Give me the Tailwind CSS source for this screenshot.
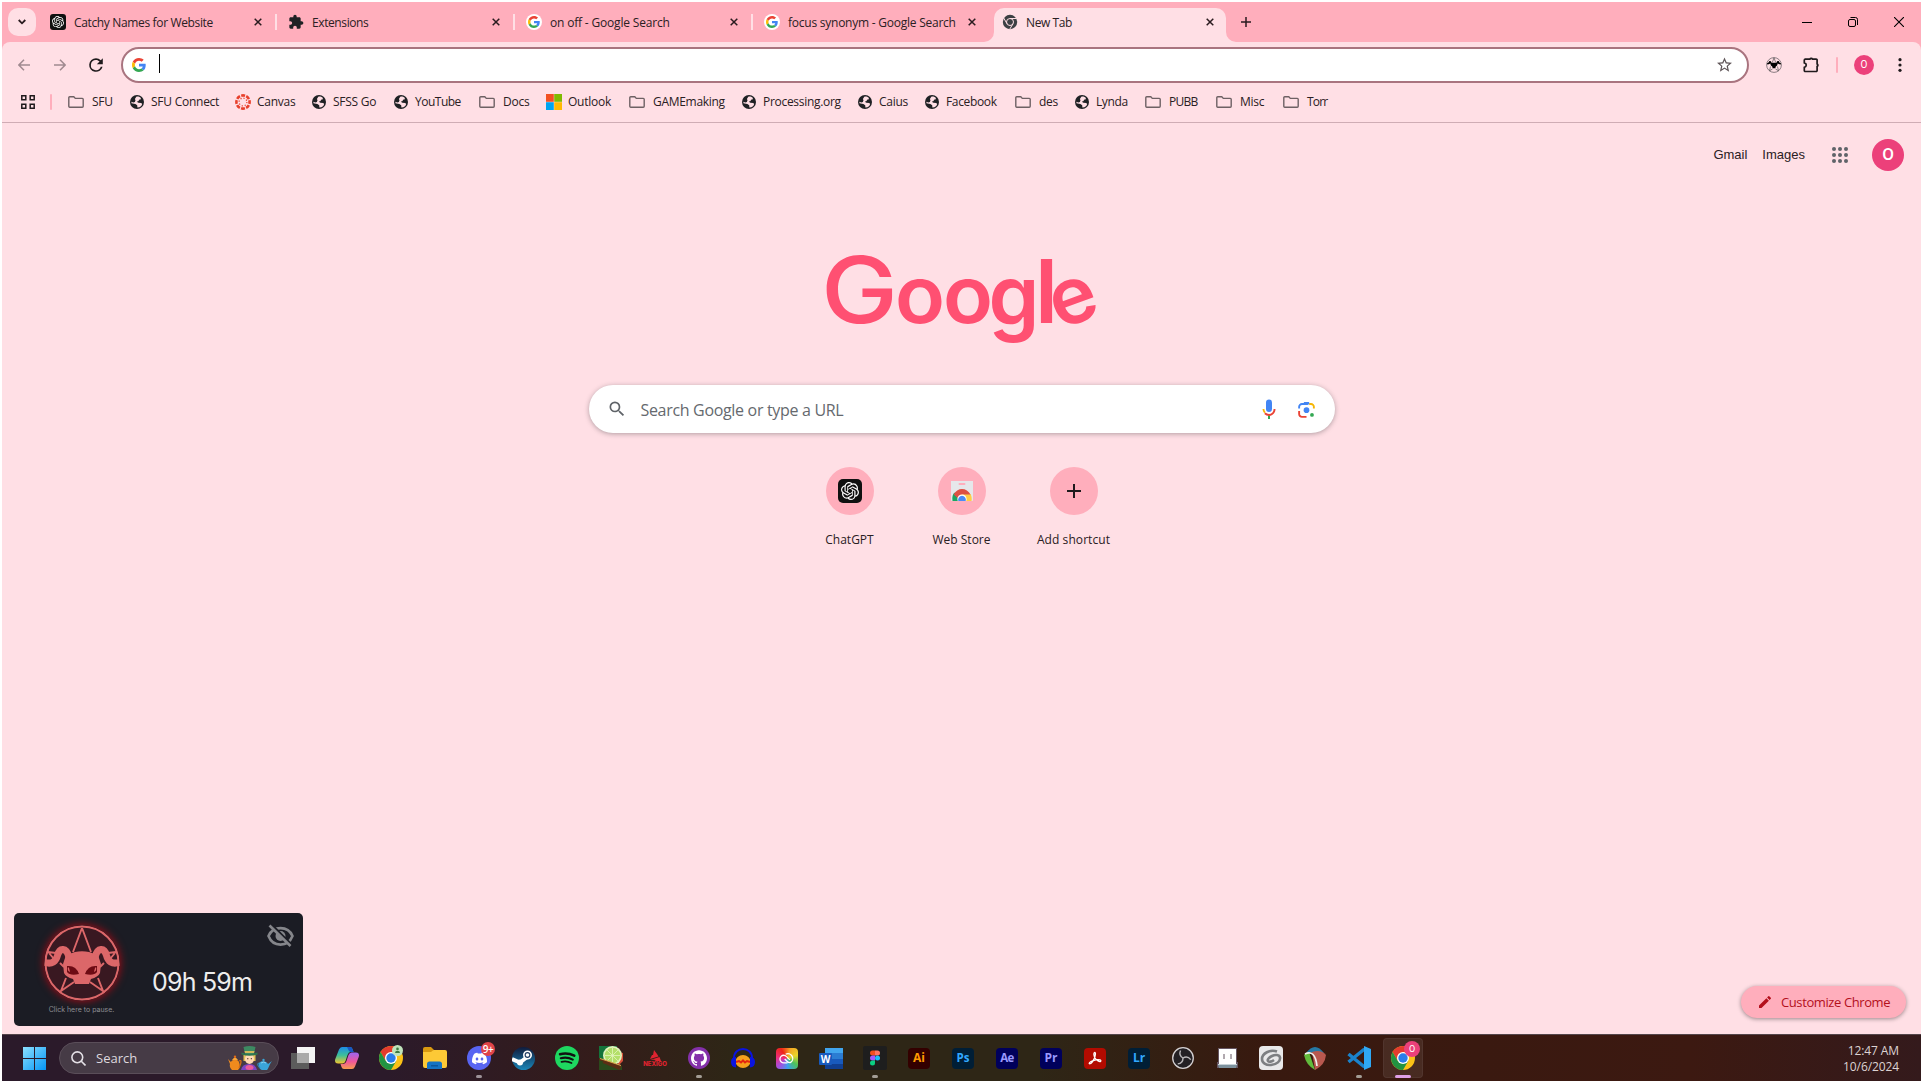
<!DOCTYPE html>
<html lang="en">
<head>
  <meta charset="UTF-8" />
  <meta name="viewport" content="width=device-width, initial-scale=1.0">
  <title>New Tab</title>
  <script src="https://cdn.jsdelivr.net/npm/@tailwindcss/browser@4"></script>
</head>
<body class="bg-white overflow-hidden font-['Open_Sans','Noto_Sans',sans-serif] text-[#2a2023]">

  <!-- Shared icons -->
  <svg class="hidden">
    <symbol id="google" viewBox="0 0 48 48">
      <path fill="#EA4335" d="M24 9.5c3.54 0 6.71 1.22 9.21 3.6l6.85-6.85C35.9 2.38 30.47 0 24 0 14.62 0 6.51 5.38 2.56 13.22l7.98 6.19C12.43 13.72 17.74 9.5 24 9.5z"/>
      <path fill="#4285F4" d="M46.98 24.55c0-1.57-.15-3.09-.38-4.55H24v9.02h12.94c-.58 2.96-2.26 5.48-4.78 7.18l7.73 6c4.51-4.18 7.09-10.36 7.09-17.65z"/>
      <path fill="#FBBC05" d="M10.53 28.59A14.5 14.5 0 0 1 9.77 24c0-1.6.27-3.14.76-4.59l-7.98-6.19A23.9 23.9 0 0 0 0 24c0 3.88.92 7.54 2.56 10.78l7.97-6.19z"/>
      <path fill="#34A853" d="M24 48c6.48 0 11.93-2.13 15.89-5.81l-7.73-6c-2.15 1.45-4.92 2.3-8.16 2.3-6.26 0-11.57-4.22-13.47-9.91l-7.98 6.19C6.51 42.62 14.62 48 24 48z"/>
    </symbol>
    <symbol id="openai" viewBox="0 0 24 24">
      <path d="M22.2819 9.8211a5.9847 5.9847 0 0 0-.5157-4.9108 6.0462 6.0462 0 0 0-6.5098-2.9A6.0651 6.0651 0 0 0 4.9807 4.1818a5.9847 5.9847 0 0 0-3.9977 2.9 6.0462 6.0462 0 0 0 .7427 7.0966 5.98 5.98 0 0 0 .511 4.9107 6.051 6.051 0 0 0 6.5146 2.9001A5.9847 5.9847 0 0 0 13.2599 24a6.0557 6.0557 0 0 0 5.7718-4.2058 5.9894 5.9894 0 0 0 3.9977-2.9001 6.0557 6.0557 0 0 0-.7475-7.0729zm-9.022 12.6081a4.4755 4.4755 0 0 1-2.8764-1.0408l.1419-.0804 4.7783-2.7582a.7948.7948 0 0 0 .3927-.6813v-6.7369l2.02 1.1686a.071.071 0 0 1 .038.052v5.5826a4.504 4.504 0 0 1-4.4945 4.4944zm-9.6607-4.1254a4.4708 4.4708 0 0 1-.5346-3.0137l.142.0852 4.783 2.7582a.7712.7712 0 0 0 .7806 0l5.8428-3.3685v2.3324a.0804.0804 0 0 1-.0332.0615L9.74 19.9502a4.4992 4.4992 0 0 1-6.1408-1.6464zM2.3408 7.8956a4.485 4.485 0 0 1 2.3655-1.9728V11.6a.7664.7664 0 0 0 .3879.6765l5.8144 3.3543-2.0201 1.1685a.0757.0757 0 0 1-.071 0l-4.8303-2.7865A4.504 4.504 0 0 1 2.3408 7.872zm16.5963 3.8558L13.1038 8.364 15.1192 7.2a.0757.0757 0 0 1 .071 0l4.8303 2.7913a4.4944 4.4944 0 0 1-.6765 8.1042v-5.6772a.79.79 0 0 0-.407-.667zm2.0107-3.0231l-.142-.0852-4.7735-2.7818a.7759.7759 0 0 0-.7854 0L9.409 9.2297V6.8974a.0662.0662 0 0 1 .0284-.0615l4.8303-2.7866a4.4992 4.4992 0 0 1 6.6802 4.66zM8.3065 12.863l-2.02-1.1638a.0804.0804 0 0 1-.038-.0567V6.0742a4.4992 4.4992 0 0 1 7.3757-3.4537l-.142.0805L8.704 5.459a.7948.7948 0 0 0-.3927.6813zm1.0976-2.3654l2.602-1.4998 2.6069 1.4998v2.9994l-2.5974 1.4997-2.6067-1.4997Z"/>
    </symbol>
    <symbol id="folder" viewBox="0 0 16 12">
      <path d="M1.7.8h4.1l1.5 1.6h7a.9.9 0 0 1 .9.9v7a.9.9 0 0 1-.9.9H1.7a.9.9 0 0 1-.9-.9V1.700a.9.9 0 0 1 .9-.9z" fill="none" stroke="#6e6164" stroke-width="1.4"/>
    </symbol>
    <symbol id="globe" viewBox="0 0 14 14">
      <circle cx="7" cy="7" r="7" fill="#1f2124"/>
      <path d="M6.300 1.700c1.500-.3 3.200 0 4.400 1.100l.2 1.500-1.900.5-.4 1.300-1.800.7 1.600.9 2.800.4 1 .9-.9 2-1.900 1.300-2 .2-.2-2.200-1.800-1.300L1.500 8.200l-.1-1.400 1.900.6 1.600-.5.6-1.600-.6-1.300z" fill="#ffdfe5"/>
    </symbol>
    <symbol id="close" viewBox="0 0 8 8">
      <path d="M.7.7l6.600 6.600M7.300.7L.7 7.300" stroke="#2a1b1f" stroke-width="1.5" fill="none"/>
    </symbol>
    <symbol id="search" viewBox="0 0 24 24">
      <path d="M15.500 14h-.79l-.28-.27A6.471 6.471 0 0 0 16 9.500 6.500 6.500 0 1 0 9.500 16c1.610 0 3.090-.59 4.230-1.570l.27.28v.79l5 4.990L20.490 19l-4.990-5zm-6 0C7.010 14 5 11.990 5 9.500S7.010 5 9.500 5 14 7.010 14 9.500 11.990 14 9.500 14z"/>
    </symbol>
    <symbol id="chrome" viewBox="0 0 24 24">
      <circle cx="12" cy="12" r="12" fill="#fbc116"/>
      <path d="M12 6h10.390A12 12 0 0 0 1.610 6L6.800 15z" fill="#e33b2e"/>
      <path d="M1.610 6A12 12 0 0 0 12 24l5.200-9H6.800z" fill="#229342"/>
      <circle cx="12" cy="12" r="6" fill="#fff"/>
      <circle cx="12" cy="12" r="4.700" fill="#2a7de9"/>
    </symbol>
    <!-- goat skull inside a pentagram -->
    <symbol id="goat" viewBox="0 0 76 76">
      <circle cx="38" cy="38" r="36.500" fill="none" stroke="currentColor" stroke-width="2"/>
      <path d="M38 3L29 27M38 3l9 24M4 27l8 1M72 27l-8 1M5 28l5 6M71 28l-5 6M16 38l4 4M60 38l-4 4M22 53l-5 13 13-9M54 53l5 13-13-9" fill="none" stroke="currentColor" stroke-width="1.900"/>
      <path d="M1 37.500c7 2 11-1 12.500-7 2-8 9-8.500 11.500 2M75 37.500c-7 2-11-1-12.500-7-2-8-9-8.500-11.500 2" fill="none" stroke="currentColor" stroke-width="7"/>
      <path d="M22 30q6-2 9-3 7-1.500 14 0 3 1 9 3l3 9-1 9q-2 4-9 6l-2 5H31l-2-5q-7-2-9-6l-1-9z" fill="currentColor"/>
      <path d="M23 41q9-1 12 8-9 2-12-2zM53 41q-9-1-12 8 9 2 12-2z" fill="#6d0b14"/>
      <path d="M24 42q-1 4 2 5l-1-4zM52 42q1 4-2 5l1-4z" fill="currentColor"/>
    </symbol>
  </svg>

  <div class="w-[1923px] h-[1083px] p-[2px] flex flex-col">

    <!-- Tab strip -->
    <div class="h-10 shrink-0 bg-[#ffaebc] flex items-center text-xs tracking-[-0.35px]">
      <div class="w-[37px] pl-[6px] shrink-0">
        <div class="w-7 h-7 rounded-[10px] bg-[#ffdfe5] flex items-center justify-center">
          <svg class="w-2 h-[6px]" viewBox="0 0 8 6"><path d="M.7 1L4 4.300 7.300 1" fill="none" stroke="#2a1b1f" stroke-width="1.800"/></svg>
        </div>
      </div>
      <div class="w-[238px] shrink-0 flex items-center pl-[11px]">
        <div class="w-4 h-4 rounded-[3px] bg-[#101010] flex items-center justify-center"><svg class="w-3 h-3 fill-white"><use href="#openai"/></svg></div>
        <span class="ml-2 pt-[2px] flex-1 whitespace-nowrap">Catchy Names for Website</span>
        <svg class="w-2 h-2 mr-[13px]"><use href="#close"/></svg>
        <div class="w-[2px] h-4 bg-[#ffdfe5]"></div>
      </div>
      <div class="w-[238px] shrink-0 flex items-center pl-[11px]">
        <svg class="w-4 h-4 fill-[#1f2124]" viewBox="0 0 24 24"><path d="M20.500 11H19V7c0-1.100-.9-2-2-2h-4V3.500C13 2.120 11.880 1 10.500 1S8 2.120 8 3.500V5H4c-1.100 0-1.990.9-1.990 2v3.800H3.500c1.490 0 2.700 1.210 2.700 2.700s-1.210 2.700-2.700 2.700H2V20c0 1.100.9 2 2 2h3.800v-1.500c0-1.490 1.210-2.700 2.700-2.700s2.700 1.210 2.700 2.700V22H17c1.100 0 2-.9 2-2v-4h1.500c1.380 0 2.500-1.120 2.500-2.500S21.880 11 20.500 11z"/></svg>
        <span class="ml-2 pt-[2px] flex-1 whitespace-nowrap tracking-[-0.4px]">Extensions</span>
        <svg class="w-2 h-2 mr-[13px]"><use href="#close"/></svg>
        <div class="w-[2px] h-4 bg-[#ffdfe5]"></div>
      </div>
      <div class="w-[238px] shrink-0 flex items-center pl-[11px]">
        <div class="w-4 h-4 rounded-full bg-white flex items-center justify-center"><svg class="w-3 h-3"><use href="#google"/></svg></div>
        <span class="ml-2 pt-[2px] flex-1 whitespace-nowrap tracking-[-0.18px]">on off - Google Search</span>
        <svg class="w-2 h-2 mr-[13px]"><use href="#close"/></svg>
        <div class="w-[2px] h-4 bg-[#ffdfe5]"></div>
      </div>
      <div class="w-[238px] shrink-0 flex items-center pl-[11px]">
        <div class="w-4 h-4 rounded-full bg-white flex items-center justify-center"><svg class="w-3 h-3"><use href="#google"/></svg></div>
        <span class="ml-2 pt-[2px] flex-1 whitespace-nowrap tracking-[-0.24px]">focus synonym - Google Search</span>
        <svg class="w-2 h-2 mr-[15px]"><use href="#close"/></svg>
      </div>
      <div class="relative w-[232px] h-[34px] ml-[3px] mt-[6px] pb-[6px] shrink-0 flex items-center pl-[8px] rounded-t-[10px] bg-[#ffdfe5]">
        <svg class="absolute bottom-0 -left-[10px] w-[10px] h-[10px]" viewBox="0 0 10 10"><path d="M10 0v10H0A10 10 0 0 0 10 0z" fill="#ffdfe5"/></svg>
        <svg class="absolute bottom-0 -right-[10px] w-[10px] h-[10px]" viewBox="0 0 10 10"><path d="M0 0v10h10A10 10 0 0 1 0 0z" fill="#ffdfe5"/></svg>
        <svg class="w-4 h-4" viewBox="0 0 16 16">
          <circle cx="8" cy="8" r="7.200" fill="#3c4043"/>
          <g fill="none" stroke="#ffdfe5" stroke-width="1"><circle cx="8" cy="8" r="3.500"/><path d="M8 4.500h6.600M5 9.700L1.700 4M11 9.700l-3.400 5.700"/></g>
        </svg>
        <span class="ml-2 pt-[2px] flex-1 tracking-[-0.4px]">New Tab</span>
        <svg class="w-2 h-2 mr-3"><use href="#close"/></svg>
      </div>
      <svg class="w-[10px] h-[10px] ml-[15px]" viewBox="0 0 10 10"><path d="M5 0v10M0 5h10" stroke="#2a1b1f" stroke-width="1.500"/></svg>
      <div class="ml-auto flex items-center gap-9 pr-[17px]">
        <svg class="w-[10px] h-[10px]" viewBox="0 0 10 10"><path d="M0 5.500h10" stroke="#000"/></svg>
        <svg class="w-[10px] h-[10px]" viewBox="0 0 10 10" fill="none" stroke="#000"><rect x=".5" y="2.500" width="7" height="7" rx="1.500"/><path d="M2.500.5H7.500a2 2 0 0 1 2 2V8"/></svg>
        <svg class="w-[10px] h-[10px]" viewBox="0 0 10 10"><path d="M0 0l10 10M10 0L0 10" stroke="#000" stroke-width="1.100"/></svg>
      </div>
    </div>

    <!-- Toolbar -->
    <div class="h-[45px] shrink-0 bg-[#ffaebc]">
      <div class="h-full bg-[#ffdfe5] rounded-t-lg flex items-center">
        <svg class="w-3 h-3 ml-4" viewBox="0 0 12 12"><path d="M12 6H1M6 .8L.9 6 6 11.200" fill="none" stroke="#a08a90" stroke-width="1.500"/></svg>
        <svg class="w-3 h-3 ml-6" viewBox="0 0 12 12"><path d="M0 6h11M6 .8L11.100 6 6 11.200" fill="none" stroke="#a08a90" stroke-width="1.500"/></svg>
        <svg class="w-4 h-4 ml-[22px]" viewBox="4 4 16 16"><path fill="#1f1a1c" d="M17.650 6.350A7.960 7.960 0 0 0 12 4a8 8 0 1 0 7.730 10h-2.080A6 6 0 1 1 12 6c1.660 0 3.140.69 4.220 1.780L13 11h7V4l-2.350 2.350z" transform="translate(1.800 1.800) scale(.85)"/></svg>
        <div class="w-[1628px] h-9 ml-[17px] rounded-full border-2 border-[#a9747f] bg-white flex items-center">
          <svg class="w-[14px] h-[14px] ml-[9px]"><use href="#google"/></svg>
          <div class="w-px h-[19px] bg-black ml-[13px] mb-[2px]"></div>
          <svg class="w-[15px] h-[15px] ml-auto mr-[15px]" viewBox="2 2 20 19" fill="#5f5558"><path d="M22 9.240l-7.190-.62L12 2 9.190 8.630 2 9.240l5.460 4.730L5.820 21 12 17.270 18.180 21l-1.630-7.030L22 9.240zM12 15.400l-3.760 2.270 1-4.280-3.320-2.880 4.380-.38L12 6.100l1.710 4.040 4.380.38-3.320 2.880 1 4.280L12 15.400z"/></svg>
        </div>
        <svg class="w-4 h-4 ml-[17px] text-black" viewBox="0 0 16 16">
          <circle cx="8" cy="8" r="7.400" fill="none" stroke="#6f666b" stroke-width=".8"/>
          <path d="M5.500 5.800h5c.2-1.400.9-2.300 2-1.700.7.400.8 2.200 2.500 2.200v1c-1.500.3-2.700-.2-3.200-1l-.7 2.200-1.300 1-.5 1.700H6.700L6.200 9.500l-1.300-1-.7-2.200C3.700 7.100 2.500 7.600 1 7.300v-1c1.700 0 1.800-1.800 2.500-2.200 1.100-.6 1.800.3 2 1.700z"/>
          <path d="M8 .8L6.300 5.500M8 .8l1.700 4.700M4.500 9.500l-1 4.300L6.500 12M11.500 9.500l1 4.300-3-1.800" fill="none" stroke="#555" stroke-width=".7"/>
        </svg>
        <svg class="w-[17px] h-[17px] ml-[21px]" viewBox="0 0 17 17"><path d="M2 3.200h4.900a1.400 1.400 0 0 1 2.600 0h3.700a.9.9 0 0 1 .9.9V8a1.300 1.300 0 0 1 0 2.400v4.200a.9.900 0 0 1-.9.9H2.200a.9.9 0 0 1-.9-.9v-3.200c2.600-.7 2.600-4.100 0-4.600V4a.9.9 0 0 1 .9-.8z" fill="none" stroke="#1f1a1c" stroke-width="1.700"/></svg>
        <div class="w-[2px] h-4 ml-[16px] rounded bg-[#ffaebc]"></div>
        <div class="w-5 h-5 ml-4 rounded-full bg-[#ec407a] text-white text-[10px] font-['Roboto',sans-serif] flex items-center justify-center">O</div>
        <svg class="w-1 h-[14px] ml-6" viewBox="0 0 4 14" fill="#1f1a1c"><circle cx="2" cy="1.700" r="1.600"/><circle cx="2" cy="7" r="1.600"/><circle cx="2" cy="12.300" r="1.600"/></svg>
      </div>
    </div>

    <!-- Bookmarks bar -->
    <div class="h-9 shrink-0 bg-[#ffdfe5] border-b border-[#cfacb4] flex items-center pb-[6px] text-xs leading-4 tracking-[-0.25px] whitespace-nowrap">
      <svg class="w-[14px] h-[14px] ml-[19px]" viewBox="0 0 14 14" fill="none" stroke="#1f1a1c" stroke-width="1.500"><path d="M.8.8h4v4h-4zM9.200.8h4v4h-4zM.8 9.200h4v4h-4zM9.200 9.200h4v4h-4z"/></svg>
      <div class="w-[2px] h-4 ml-[15px] rounded bg-[#ffaebc]"></div>
      <div class="flex items-center gap-2 w-[62px] ml-4"><svg class="w-4 h-3 shrink-0"><use href="#folder"/></svg>SFU</div>
      <div class="flex items-center gap-[7px] w-[105px]"><svg class="w-[14px] h-[14px] shrink-0"><use href="#globe"/></svg>SFU Connect</div>
      <div class="flex items-center gap-[6px] w-[77px]">
        <svg class="w-4 h-4 shrink-0" viewBox="0 0 16 16" fill="none" stroke="#e8402c"><circle cx="8" cy="8" r="6.600" stroke-width="2.600" stroke-dasharray="3.900 1.280" stroke-dashoffset="2"/><circle cx="8" cy="8" r="3.900" stroke-width="1.200" stroke-dasharray="1.200 1.860"/></svg>Canvas</div>
      <div class="flex items-center gap-[7px] w-[82px]"><svg class="w-[14px] h-[14px] shrink-0"><use href="#globe"/></svg>SFSS Go</div>
      <div class="flex items-center gap-[7px] w-[85px] tracking-[-0.5px]"><svg class="w-[14px] h-[14px] shrink-0"><use href="#globe"/></svg>YouTube</div>
      <div class="flex items-center gap-2 w-[67px]"><svg class="w-4 h-3 shrink-0"><use href="#folder"/></svg>Docs</div>
      <div class="flex items-center gap-[6px] w-[83px]">
        <svg class="w-4 h-4 shrink-0" viewBox="0 0 16 16"><path fill="#f25022" d="M0 0h7.800v7.800H0z"/><path fill="#7fba00" d="M8.200 0H16v7.800H8.200z"/><path fill="#00a4ef" d="M0 8.200h7.800V16H0z"/><path fill="#ffb900" d="M8.200 8.200H16V16H8.200z"/></svg>Outlook</div>
      <div class="flex items-center gap-2 w-[113px] tracking-[-0.3px]"><svg class="w-4 h-3 shrink-0"><use href="#folder"/></svg>GAMEmaking</div>
      <div class="flex items-center gap-[7px] w-[116px] tracking-[-0.3px]"><svg class="w-[14px] h-[14px] shrink-0"><use href="#globe"/></svg>Processing.org</div>
      <div class="flex items-center gap-[7px] w-[67px]"><svg class="w-[14px] h-[14px] shrink-0"><use href="#globe"/></svg>Caius</div>
      <div class="flex items-center gap-[7px] w-[90px] tracking-[-0.35px]"><svg class="w-[14px] h-[14px] shrink-0"><use href="#globe"/></svg>Facebook</div>
      <div class="flex items-center gap-2 w-[60px]"><svg class="w-4 h-3 shrink-0"><use href="#folder"/></svg>des</div>
      <div class="flex items-center gap-[7px] w-[70px] tracking-[-0.4px]"><svg class="w-[14px] h-[14px] shrink-0"><use href="#globe"/></svg>Lynda</div>
      <div class="flex items-center gap-2 w-[71px] tracking-[-0.7px]"><svg class="w-4 h-3 shrink-0"><use href="#folder"/></svg>PUBB</div>
      <div class="flex items-center gap-2 w-[67px]"><svg class="w-4 h-3 shrink-0"><use href="#folder"/></svg>Misc</div>
      <div class="flex items-center gap-2 tracking-[-0.8px]"><svg class="w-4 h-3 shrink-0"><use href="#folder"/></svg>Torr</div>
    </div>

    <!-- New tab page -->
    <div class="relative flex-1 bg-[#ffdfe5] flex flex-col items-center">
      <div class="self-stretch h-16 flex items-center justify-end pr-[17px] font-['Liberation_Sans',Arial,sans-serif] text-[13px]">
        <span>Gmail</span>
        <span class="ml-[15px]">Images</span>
        <svg class="w-4 h-4 ml-[27px]" viewBox="0 0 16 16" fill="#5f6368"><circle cx="2" cy="2" r="2"/><circle cx="8" cy="2" r="2"/><circle cx="14" cy="2" r="2"/><circle cx="2" cy="8" r="2"/><circle cx="8" cy="8" r="2"/><circle cx="14" cy="8" r="2"/><circle cx="2" cy="14" r="2"/><circle cx="8" cy="14" r="2"/><circle cx="14" cy="14" r="2"/></svg>
        <div class="w-8 h-8 ml-6 rounded-full bg-[#ec407a] text-white text-[17px] font-medium font-['Roboto',sans-serif] flex items-center justify-center">O</div>
      </div>

      <!-- Wordmark, letters placed one by one so the e can tilt -->
      <svg class="w-[272px] h-[92px] mt-[66px] shrink-0 overflow-visible" viewBox="0 0 272 92" text-anchor="middle" font-family="Inter, sans-serif" font-weight="600" font-size="79" fill="#ff5072">
        <text transform="translate(33.500 70) scale(1.120 1)" font-size="92" font-weight="500">G</text>
        <text transform="translate(94 70) scale(1.040 1)">o</text>
        <text transform="translate(142 70) scale(1.040 1)">o</text>
        <text transform="translate(188 72) scale(1.030 1.050)">g</text>
        <text transform="translate(220.500 70)" font-size="88">l</text>
        <text transform="translate(247.500 70) rotate(-20 0 -22)">e</text>
      </svg>

      <div class="w-[746px] h-12 mt-10 shrink-0 rounded-full bg-white shadow-[0_1px_5px_rgba(32,33,36,0.35)] flex items-center">
        <svg class="w-5 h-5 ml-[18px] fill-[#5f6368]"><use href="#search"/></svg>
        <span class="ml-[14px] pt-[2px] text-base text-[#65696e] tracking-[-0.32px]">Search Google or type a URL</span>
        <svg class="w-6 h-6 ml-auto" viewBox="0 0 24 24"><path fill="#4285f4" d="M12 15a3 3 0 0 0 3-3V5.500a3 3 0 0 0-6 0V12a3 3 0 0 0 3 3z"/><path fill="#34a853" d="M11 18.200h2V22h-2z"/><path fill="#f6b604" d="M7.200 16.200A6.600 6.600 0 0 1 5.500 12h1.900c0 1.200.5 2.200 1.200 3z"/><path fill="#ea4335" d="M12 17a5 5 0 0 1-3.500-1.500l-1.300 1.400A7 7 0 0 0 12 18.900c3.700 0 6.500-3.100 6.500-6.900h-1.900c0 3-2 5-4.600 5z"/></svg>
        <svg class="w-[17px] h-[17px] ml-[17px] mr-5" viewBox="0 0 18 18" fill="none" stroke-width="2">
          <path stroke="#4285f4" d="M1.200 8V6.200a3 3 0 0 1 3-3h6.300"/><path fill="#4285f4" d="M5.200 3.700L6.500 1h5l1.300 2.700z"/>
          <path stroke="#f6b604" d="M12 3.200h1.800a3 3 0 0 1 3 3V8"/><path stroke="#ea4335" d="M1.200 10.500v3.300a3 3 0 0 0 3 3h4.800"/>
          <circle cx="9" cy="9.700" r="3" fill="#4285f4"/><circle cx="14.800" cy="14.800" r="2" fill="#34a853"/>
        </svg>
      </div>

      <!-- Shortcuts -->
      <div class="flex mt-[34px] text-xs">
        <div class="w-28 flex flex-col items-center">
          <div class="w-12 h-12 rounded-full bg-[#ffaebc] flex items-center justify-center">
            <div class="w-6 h-6 rounded-[5px] bg-[#101010] flex items-center justify-center"><svg class="w-[18px] h-[18px] fill-white"><use href="#openai"/></svg></div>
          </div>
          <span class="mt-[17px]">ChatGPT</span>
        </div>
        <div class="w-28 flex flex-col items-center">
          <div class="w-12 h-12 rounded-full bg-[#ffaebc] flex items-center justify-center">
            <svg class="w-[22px] h-5" viewBox="0 0 22 20"><path fill="#e6e7ea" d="M0 0h22v19a1 1 0 0 1-1 1H1a1 1 0 0 1-1-1z"/><rect x="7.500" y="2" width="7" height="2" rx="1" fill="#ffaebc"/><path fill="#1da462" d="M1.500 20c-.6-4 .2-6.500 2-8.500L9 20z"/><path fill="#ffcd46" d="M10 13h9.500c1.200 2.500 1.500 5 1 7h-9z"/><path fill="#dd5144" d="M2.700 13.500C6 6 16 6 19.500 13.500H11L6.500 17z"/><circle cx="11" cy="18" r="4.600" fill="#fff"/><path fill="#4c8bf5" d="M7.300 20a3.900 3.900 0 1 1 7.400 0z"/></svg>
          </div>
          <span class="mt-[17px]">Web Store</span>
        </div>
        <div class="w-28 flex flex-col items-center">
          <div class="w-12 h-12 rounded-full bg-[#ffaebc] flex items-center justify-center">
            <svg class="w-[14px] h-[14px]" viewBox="0 0 14 14"><path d="M7 0v14M0 7h14" stroke="#1f1a1c" stroke-width="2"/></svg>
          </div>
          <span class="mt-[17px] tracking-[0.08px]">Add shortcut</span>
        </div>
      </div>

      <!-- Timer widget, floats over the page -->
      <div class="absolute left-3 bottom-2 w-[289px] h-[113px] rounded-[5px] bg-[#1b1c24] flex font-['Inter',sans-serif]">
        <div class="w-[135px] flex flex-col items-center pt-3">
          <svg class="w-[76px] h-[76px] text-[#dc6769] rounded-full bg-[#e00010]/15 shadow-[0_0_8px_rgba(225,0,15,0.75)]"><use href="#goat"/></svg>
          <span class="mt-[3px] text-[7px] leading-3 text-[#8e8e93]">Click here to pause.</span>
        </div>
        <div class="pl-[3px] pt-[51px] text-[25px] leading-9 text-[#ededed] tracking-[-0.8px] whitespace-nowrap">09h 59m</div>
        <svg class="absolute right-[9px] top-[11px] w-[27px] h-[24px]" viewBox="0 0 27 24" fill="none" stroke="#85868b" stroke-width="2.600">
          <path d="M1.500 12C6 1.500 21 1.500 25.500 12 21 23.500 6 23.500 1.500 12z"/><circle cx="13.500" cy="12" r="5" fill="#85868b" stroke="none"/>
          <path d="M4 .5l21 21" stroke="#1b1c24" stroke-width="3"/><path d="M2.500 1.500l21 20.500"/>
        </svg>
      </div>

      <div class="absolute right-[15px] bottom-4 w-[165px] h-8 rounded-full bg-[#ffaebc] shadow-[0_1px_4px_rgba(0,0,0,0.4)] flex items-center pl-4 text-[13px] text-[#b3101c] whitespace-nowrap">
        <svg class="w-4 h-4 fill-[#b3101c]" viewBox="0 0 24 24"><path d="M3 17.250V21h3.750L17.810 9.940l-3.750-3.750L3 17.250zM20.710 7.040a1 1 0 0 0 0-1.410l-2.340-2.340a1 1 0 0 0-1.410 0l-1.830 1.830 3.750 3.750 1.830-1.830z"/></svg>
        <span class="ml-2 pt-[2px] tracking-[-0.4px]">Customize Chrome</span>
      </div>
    </div>

    <!-- Taskbar -->
    <div class="h-[47px] shrink-0 border-t border-[#54454a] bg-[linear-gradient(90deg,#2b1a2a_0%,#2b1a2a_20%,#341c1a_31%,#2e2616_38%,#2e2616_54%,#38190f_66%,#3c1911_88%,#341a1c_100%)] flex items-center text-white">
      <svg class="w-[23px] h-[23px] ml-[21px] shrink-0" viewBox="0 0 23 23">
        <linearGradient id="win" x1="0" y1="0" x2="1" y2="1"><stop stop-color="#8be0ff"/><stop offset="1" stop-color="#0595f5"/></linearGradient>
        <path fill="url(#win)" d="M0 0h11v11H0zM12 0h11v11H12zM0 12h11v11H0zM12 12h11v11H12z"/>
      </svg>
      <div class="w-[220px] h-8 ml-[13px] shrink-0 rounded-full bg-[#463b46] border border-[#5a4e59] flex items-center">
        <svg class="w-[15px] h-[15px] ml-[11px]" viewBox="0 0 15 15" fill="none" stroke="#e4e0e6" stroke-width="1.600"><circle cx="6.300" cy="6.300" r="5.400"/><path d="M10.300 10.300l4.200 4.200"/></svg>
        <span class="ml-[10px] pt-px text-[13px] text-[#ddd8de]">Search</span>
        <!-- hatter with two teapots -->
        <svg class="w-11 h-[25px] ml-auto mr-[6px]" viewBox="0 0 44 25">
          <path fill="#f08a1d" d="M0 13l3 3c1-3 7-3 8 0q2 5-1 8H4q-3-3-2-6z"/><path d="M11 15q4-2 0 7" fill="none" stroke="#d86b12" stroke-width="1.300"/><path d="M4 14q3-5 6 0z" fill="#f6a63a"/><circle cx="7" cy="10.800" r="1.200" fill="#e36c17"/>
          <path fill="#3aa5d8" d="M44 15l-4 3c-1-3-7-4-9-1-1 3 1 7 3 7h5c2-2 2-5 5-9z"/><circle cx="35.500" cy="14" r="1.200" fill="#3aa5d8"/><path d="M31 17q-3 1 1 5" fill="none" stroke="#2a85ba" stroke-width="1.200"/><path d="M33 17q3-2 5 0" stroke="#8ad2ef" fill="none"/>
          <path fill="#7b45c4" d="M13 24q1-6 8-6t8 6z"/><path fill="#e3c257" d="M15.500 9h12v6h-12z"/><ellipse cx="21.500" cy="13" rx="4.500" ry="5" fill="#ffd9b5"/><path fill="#3d8a62" d="M15.500 1q6-2 12 0l-1.500 7h-9z"/><path fill="#d3b95a" d="M16.500 5h10l-.5 2h-9z"/><path fill="#2e7650" d="M13.500 6.500q8 3 16 0v2q-8 2.500-16 0z"/><path d="M19.800 12v1.300M23.300 12v1.300" stroke="#45312a"/><ellipse cx="21.500" cy="21.500" rx="4" ry="2.500" fill="#ea5a9a"/>
        </svg>
      </div>

      <div class="flex ml-[2px] h-[46px]">
        <div class="w-11 flex items-center justify-center"><svg class="w-6 h-[22px]" viewBox="0 0 24 22"><path fill="#5c5c5c" d="M0 6h18v16H0z"/><path fill="#f4f4f4" d="M6 0h18v16H6z"/><path fill="#a9a9a9" d="M6 6h12v10H6z"/></svg></div>
        <div class="w-11 flex items-center justify-center">
          <svg class="w-6 h-[22px]" viewBox="0 0 24 22">
            <linearGradient id="cop1" x1="0" y1="0" x2="0" y2="1"><stop stop-color="#1d8ce8"/><stop offset=".5" stop-color="#3bbf9a"/><stop offset="1" stop-color="#f1c52e"/></linearGradient>
            <linearGradient id="cop2" x1="0" y1="0" x2="0" y2="1"><stop stop-color="#9a65f2"/><stop offset=".55" stop-color="#f0569a"/><stop offset="1" stop-color="#f99b4e"/></linearGradient>
            <path fill="url(#cop1)" d="M7 0h8q2 0 2.500 2l1 3h-3q-2 0-3 3l-2 6q-1 2.500-3 2.500H3q-4 0-2.700-4.500L4 2.500Q5 0 7 0z"/>
            <path fill="url(#cop2)" d="M17 22H9q-2 0-2.500-2l-1-3h3q2 0 3-3l2-6q1-2.500 3-2.500H21q4 0 2.700 4.500L20 19.500Q19 22 17 22z"/>
            <path fill="#1858c4" d="M12 0h3q2 0 2.500 2l1 3h-3q-1.500-.5-2-2z"/>
          </svg>
        </div>
        <div class="relative w-11 flex items-center justify-center"><svg class="w-6 h-6"><use href="#chrome"/></svg>
          <svg class="absolute left-[23px] top-[10px] w-[11px] h-[11px]" viewBox="0 0 11 11"><circle cx="5.500" cy="5.500" r="5.500" fill="#bfe3bb"/><circle cx="5.500" cy="3.900" r="1.300" fill="#3c7a42"/><path d="M3 8q0-2.200 2.500-2.200T8 8z" fill="#3c7a42"/></svg></div>
        <div class="w-11 flex items-center justify-center"><svg class="w-6 h-[22px]" viewBox="0 0 24 22"><path fill="#d99a10" d="M0 2q0-2 2-2h6l2.500 2.500V6H0z"/><path fill="#fdc936" d="M0 5h8l2.500-2H22q2 0 2 2v14q0 2-2 2H2q-2 0-2-2z"/><path fill="#1573c4" d="M4 22v-5q0-2.500 2.500-2.500h10q2.500 0 2.500 2.500v5z"/><path fill="#0d569d" d="M8 18h7v1.500H8z"/></svg></div>
        <div class="relative w-11 flex items-center justify-center">
          <div class="w-6 h-6 rounded-full bg-[#5865f2] flex items-center justify-center"><svg class="w-[15px] h-[15px] fill-white" viewBox="0 0 24 24"><path d="M20.317 4.3698a19.7913 19.7913 0 00-4.8851-1.5152.0741.0741 0 00-.0785.0371c-.211.3753-.4447.8648-.6083 1.2495-1.8447-.2762-3.68-.2762-5.4868 0-.1636-.3933-.4058-.8742-.6177-1.2495a.077.077 0 00-.0785-.037 19.7363 19.7363 0 00-4.8852 1.515.0699.0699 0 00-.0321.0277C.5334 9.0458-.319 13.5799.0992 18.0578a.0824.0824 0 00.0312.0561c2.0528 1.5076 4.0413 2.4228 5.9929 3.0294a.0777.0777 0 00.0842-.0276c.4616-.6304.8731-1.2952 1.226-1.9942a.076.076 0 00-.0416-.1057c-.6528-.2476-1.2743-.5495-1.8722-.8923a.077.077 0 01-.0076-.1277c.1258-.0943.2517-.1923.3718-.2914a.0743.0743 0 01.0776-.0105c3.9278 1.7933 8.18 1.7933 12.0614 0a.0739.0739 0 01.0785.0095c.1202.099.246.1981.3728.2924a.077.077 0 01-.0066.1276 12.2986 12.2986 0 01-1.873.8914.0766.0766 0 00-.0407.1067c.3604.698.7719 1.3628 1.225 1.9932a.076.076 0 00.0842.0286c1.961-.6067 3.9495-1.5219 6.0023-3.0294a.077.077 0 00.0313-.0552c.5004-5.177-.8382-9.6739-3.5485-13.6604a.061.061 0 00-.0312-.0286zM8.02 15.3312c-1.1825 0-2.1569-1.0857-2.1569-2.419 0-1.3332.9555-2.4189 2.157-2.4189 1.2108 0 2.1757 1.0952 2.1568 2.419 0 1.3332-.9555 2.4189-2.1569 2.4189zm7.9748 0c-1.1825 0-2.1569-1.0857-2.1569-2.419 0-1.3332.9554-2.4189 2.1569-2.4189 1.2108 0 2.1757 1.0952 2.1568 2.419 0 1.3332-.946 2.4189-2.1568 2.4189Z"/></svg></div>
          <div class="absolute left-[24px] top-[7px] w-[14px] h-[14px] rounded-full bg-[#e04348] text-[10px] font-semibold leading-[14px] text-center tracking-[-0.5px]">9+</div>
          <div class="absolute bottom-[3px] left-[19px] w-[6px] h-[3px] rounded-full bg-[#9d9298]"></div>
        </div>
        <div class="w-11 flex items-center justify-center"><svg class="w-[23px] h-[23px]" viewBox="0 0 23 23">
          <linearGradient id="steam" x1="0" y1="0" x2="0" y2="1"><stop stop-color="#101b3c"/><stop offset="1" stop-color="#1a86b8"/></linearGradient>
          <circle cx="11.500" cy="11.500" r="11.500" fill="url(#steam)"/><path d="M0 12l8 3.500 6.500-5" stroke="#fff" stroke-width="4" fill="none"/><circle cx="15.500" cy="8" r="3.700" fill="#1d3a60" stroke="#fff" stroke-width="1.600"/><circle cx="15.500" cy="8" r="1.800" fill="#fff"/><circle cx="8" cy="15.500" r="3" fill="#fff"/></svg></div>
        <div class="w-11 flex items-center justify-center"><svg class="w-6 h-6" viewBox="0 0 24 24"><circle cx="12" cy="12" r="12" fill="#1ed760"/><g fill="none" stroke="#111" stroke-linecap="round"><path d="M5 8.200q7.500-2 14.300 1.500" stroke-width="2.500"/><path d="M5.800 12.200q6.300-1.700 12 1.400" stroke-width="2.100"/><path d="M6.500 15.900q5.300-1.300 10 1.200" stroke-width="1.700"/></g></svg></div>
        <div class="w-11 flex items-center justify-center"><svg class="w-6 h-6" viewBox="0 0 24 24"><path fill="#14733a" d="M0 0h18v24H0z"/><path fill="#d6503a" d="M18 6l6 1v8l-5 5z"/><circle cx="13.500" cy="9.500" r="9.500" fill="#e3f3bd"/><circle cx="13.500" cy="9.500" r="7.800" fill="#b4df6a"/><path d="M13.500 2v15M6 9.500h15M8 4l11 11M19 4L8 15" stroke="#e3f4bf" stroke-width=".8"/><path fill="#2a4a1c" d="M0 12l23 8v4H0z"/><path d="M0 13l22 8M4 16l17 7" stroke="#5b2d14" stroke-width="2"/><path d="M1 12.500l21 7" stroke="#e0a84e"/></svg></div>
        <div class="w-11 flex flex-col items-center justify-center"><svg class="w-3 h-[11px]" viewBox="0 0 12 11"><path fill="#e02330" d="M5 0l3 4-4 1zM3 5l5-1 1.500 2.500L1 9zM1 10l9.500-3L12 11H7l-2-1.200z"/></svg><span class="text-[6px] leading-[6px] font-extrabold text-[#e02330] font-['Inter',sans-serif]">NEXIGO</span></div>
        <div class="relative w-11 flex items-center justify-center">
          <div class="w-[22px] h-[22px] rounded-full bg-[#8430aa] flex items-center justify-center"><svg class="w-4 h-4 fill-white" viewBox="0 0 24 24"><path d="M12 .297c-6.630 0-12 5.373-12 12 0 5.303 3.438 9.800 8.205 11.385.6.113.82-.258.82-.577 0-.285-.01-1.040-.015-2.040-3.338.724-4.042-1.610-4.042-1.610C4.422 18.070 3.633 17.700 3.633 17.700c-1.087-.744.084-.729.084-.729 1.205.084 1.838 1.236 1.838 1.236 1.070 1.835 2.809 1.305 3.495.998.108-.776.417-1.305.76-1.605-2.665-.3-5.466-1.332-5.466-5.930 0-1.310.465-2.380 1.235-3.220-.135-.303-.54-1.523.105-3.176 0 0 1.005-.322 3.300 1.230.96-.267 1.980-.399 3-.405 1.020.006 2.040.138 3 .405 2.280-1.552 3.285-1.230 3.285-1.230.645 1.653.24 2.873.12 3.176.765.84 1.230 1.910 1.230 3.220 0 4.610-2.805 5.625-5.475 5.920.42.36.81 1.096.81 2.220 0 1.606-.015 2.896-.015 3.286 0 .315.21.69.825.57C20.565 22.092 24 17.592 24 12.297c0-6.627-5.373-12-12-12"/></svg></div>
          <div class="absolute bottom-[3px] left-[19px] w-[6px] h-[3px] rounded-full bg-[#a39d95]"></div>
        </div>
        <div class="w-11 flex items-center justify-center"><svg class="w-6 h-5" viewBox="0 0 24 20"><ellipse cx="12" cy="13.500" rx="7.500" ry="6.500" fill="#f5a11c"/><path d="M5 14l3-1 2 1.500 2-2 2 2 2-1.500 3 1" stroke="#e3250f" stroke-width="2" fill="none"/><path d="M3 14V10C3-2 21-2 21 10v4" fill="none" stroke="#0a14e0" stroke-width="2"/><path d="M5 9v10.500q-5-.5-5-5.500T5 9zM19 9v10.500q5-.5 5-5.500T19 9z" fill="#0a14e0"/></svg></div>
        <div class="w-11 flex items-center justify-center"><div class="w-[22px] h-[21px] rounded-[4px] bg-[conic-gradient(from_20deg,#f5a623,#e9d62b,#4cc25a,#3aa0f0,#a34fe0,#ee2d7b,#ee2417,#f5a623)] flex items-center justify-center">
          <svg class="w-[16px] h-[12px]" viewBox="0 0 17 13" fill="none" stroke="#fff" stroke-width="1.400"><path d="M9 11.800H5A4 4 0 0 1 5 3.500q1.500 0 3 1.500l3.500 3.500M7 2.500A4.800 4.800 0 1 1 12 11.500q-2 0-3.500-1.500L6 7.500"/></svg></div></div>
        <div class="w-11 flex items-center justify-center"><div class="relative w-6 h-[21px]"><svg class="w-6 h-[21px]" viewBox="0 0 24 21"><path fill="#41a5ee" d="M6 0h18v5H6z"/><path fill="#2b7cd3" d="M6 5h18v6H6z"/><path fill="#185abd" d="M6 11h18v5H6z"/><path fill="#103f91" d="M6 16h18v5H6z"/><rect y="5" width="13" height="12" rx="1" fill="#185abd"/></svg><span class="absolute left-0 top-[5px] w-[13px] text-center text-[10px] leading-3 font-bold">W</span></div></div>
        <div class="relative w-11 flex items-center justify-center">
          <div class="w-6 h-6 rounded-[2px] bg-[#1e1e1e] flex items-center justify-center"><svg class="w-[10px] h-4" viewBox="0 0 10 15"><path fill="#f24e1e" d="M2.500 0H5v5H2.500a2.500 2.500 0 0 1 0-5z"/><path fill="#ff7262" d="M5 0h2.500a2.500 2.500 0 0 1 0 5H5z"/><path fill="#a259ff" d="M2.500 5H5v5H2.500a2.500 2.500 0 0 1 0-5z"/><circle cx="7.500" cy="7.500" r="2.500" fill="#1abcfe"/><path fill="#0acf83" d="M2.500 10H5v2.500A2.500 2.500 0 1 1 2.500 10z"/></svg></div>
          <div class="absolute bottom-[3px] left-[19px] w-[6px] h-[3px] rounded-full bg-[#a39d95]"></div>
        </div>
        <div class="w-11 flex items-center justify-center"><div class="w-[22px] h-[21px] rounded-[4px] bg-[#330000] text-[#ff9a00] text-[12px] leading-5 font-bold text-center">Ai</div></div>
        <div class="w-11 flex items-center justify-center"><div class="w-[22px] h-[21px] rounded-[4px] bg-[#001e36] text-[#31a8ff] text-[11.500px] leading-5 font-bold text-center">Ps</div></div>
        <div class="w-11 flex items-center justify-center"><div class="w-[22px] h-[21px] rounded-[4px] bg-[#00005b] text-[#9999ff] text-[11.500px] leading-5 font-bold text-center tracking-[-0.5px]">Ae</div></div>
        <div class="w-11 flex items-center justify-center"><div class="w-[22px] h-[21px] rounded-[4px] bg-[#00005b] text-[#9999ff] text-[12px] leading-5 font-bold text-center">Pr</div></div>
        <div class="w-11 flex items-center justify-center"><div class="w-[22px] h-[21px] rounded-[4px] bg-[#b30b00] flex items-center justify-center"><svg class="w-[14px] h-[14px]" viewBox="0 0 14 14"><path d="M6.500 1.500C8 1 7.500 5 6 8c-1.500 3.500-4 5.500-4.700 4.600C.7 11.500 4 9.500 8 8.800c3.300-.5 5.500.4 4.700 1.400-1 1-4.200-.7-5.700-3.200C5.800 5 5.500 2 6.500 1.500z" fill="none" stroke="#fff" stroke-width="1.300"/></svg></div></div>
        <div class="w-11 flex items-center justify-center"><div class="w-[22px] h-[21px] rounded-[4px] bg-[#001e36] text-[#31a8ff] text-[12px] leading-5 font-bold text-center">Lr</div></div>
        <div class="w-11 flex items-center justify-center"><svg class="w-[22px] h-[22px]" viewBox="0 0 22 22"><circle cx="11" cy="11" r="10.300" fill="#232024" stroke="#d3d0d2" stroke-width="1.300"/><g fill="none" stroke="#b9b6b8" stroke-width="1.400"><path d="M11 11Q6.500 8.500 8.500 3.500"/><path d="M11 11Q6.500 8.500 8.500 3.500" transform="rotate(120 11 11)"/><path d="M11 11Q6.500 8.500 8.500 3.500" transform="rotate(240 11 11)"/></g></svg></div>
        <div class="w-11 flex items-center justify-center"><svg class="w-[21px] h-[21px]" viewBox="0 0 21 21"><path fill="#655561" d="M1 0h19v14h1v6H0v-6h1z"/><path fill="#fff" d="M2 1h17v15H2z"/><path fill="#c7d2d8" d="M1 16h19v1H1z"/><path fill="#7d929e" d="M1 17l1 3h17l1-3z"/><path d="M7 6v5M14 6v5" stroke="#655561"/></svg></div>
        <div class="w-11 flex items-center justify-center"><svg class="w-6 h-6" viewBox="0 0 24 24"><rect width="24" height="24" rx="4" fill="#e9e9ea"/><path d="M18 5.500C11 3 3 7.500 3 13c0 4 4 6.500 9 6 6-.5 9.500-4 9-7.500-.5-3-5-3-8-1.500s-5 3.500-4 5 4 .5 6-1" fill="none" stroke="#7d7f82" stroke-width="2.600"/></svg></div>
        <div class="w-11 flex items-center justify-center"><svg class="w-[22px] h-[23px]" viewBox="0 0 22 23"><path fill="#2679a5" d="M2 6Q11-6 20 6l-5 4-8-5z"/><path fill="#62bb3c" d="M0 8q2-3 5-3l6 18Q2 18 0 8z"/><path fill="#b8584f" d="M8 5q9-3 14 3-1 10-11 15z"/><path d="M1 7Q11 2 13 19" fill="none" stroke="#f1f1ef" stroke-width="1.700"/></svg></div>
        <div class="relative w-11 flex items-center justify-center"><svg class="w-6 h-6" viewBox="0 0 24 24"><path d="M1.500 8l16 13M1.500 16L17.500 3" stroke="#1b83cc" stroke-width="3.500"/><path fill="#2fa8f4" d="M17 0l7 3v18l-7 3z"/></svg>
          <div class="absolute bottom-[3px] left-[19px] w-[6px] h-[3px] rounded-full bg-[#a39d95]"></div></div>
        <div class="relative w-11 flex items-center justify-center">
          <div class="w-10 h-10 rounded-[4px] bg-white/8 border border-white/5 flex items-center justify-center"><svg class="w-6 h-6"><use href="#chrome"/></svg></div>
          <div class="absolute left-[23px] top-[6px] w-4 h-4 rounded-full bg-[#ec407a] text-[9px] leading-4 text-center font-['Roboto',sans-serif]">O</div>
          <div class="absolute bottom-[3px] left-[14px] w-4 h-[3px] rounded-full bg-[#df9fe6]"></div>
        </div>
      </div>

      <div class="ml-auto pr-[22px] pt-px text-right text-[12px] leading-4 tracking-[-0.1px] text-[#dcd3d2]">
        <div>12:47 AM</div>
        <div>10/6/2024</div>
      </div>
    </div>
  </div>
</body>
</html>
